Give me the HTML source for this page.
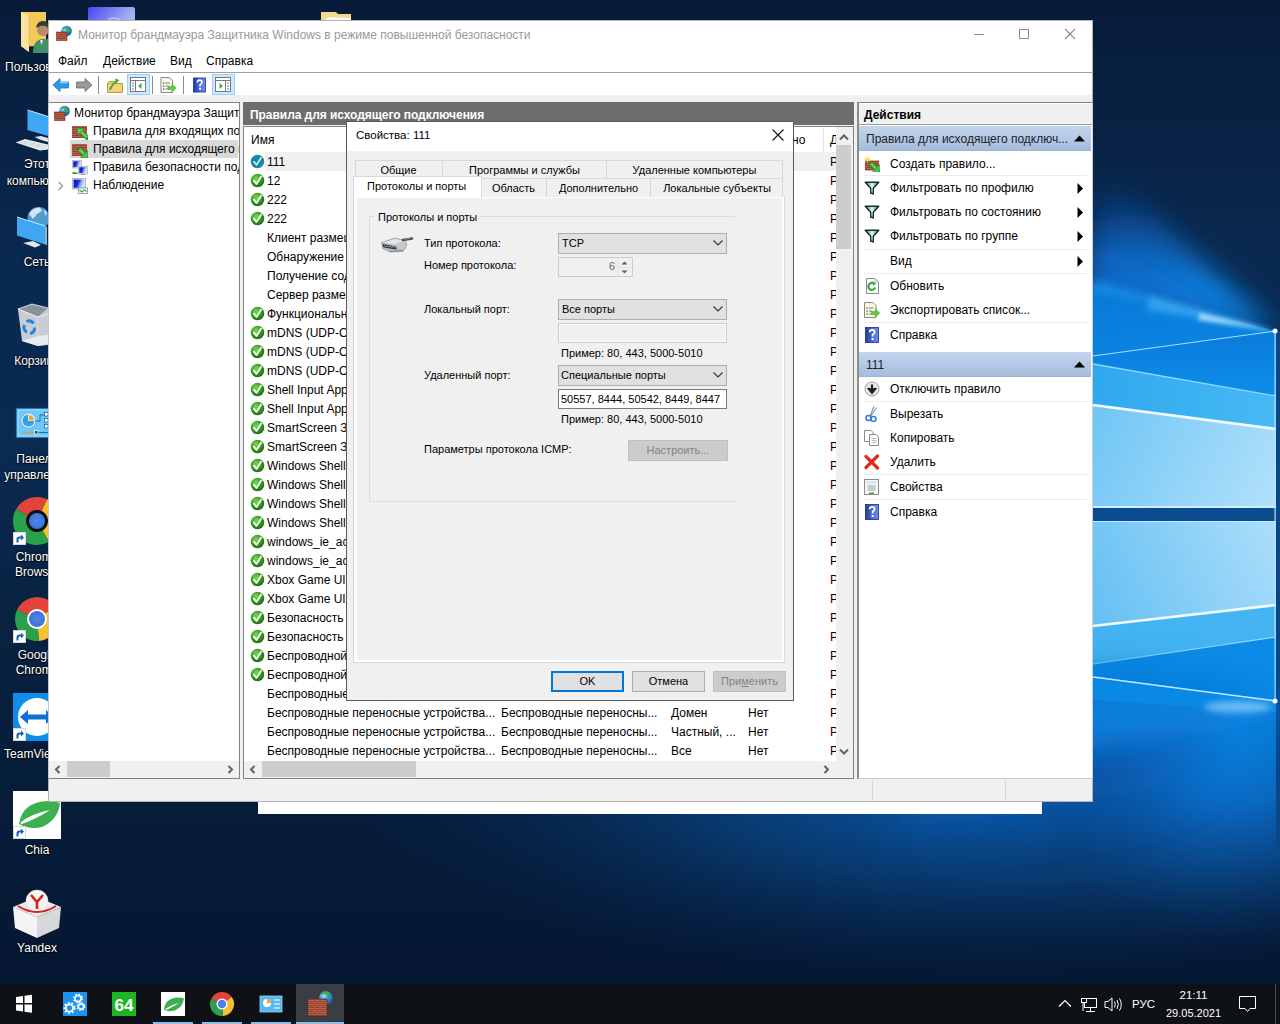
<!DOCTYPE html>
<html><head><meta charset="utf-8">
<style>
*{box-sizing:border-box;margin:0;padding:0}
html,body{width:1280px;height:1024px;overflow:hidden}
body{position:relative;background:#0b2145;font-family:"Liberation Sans",sans-serif;font-size:12px;color:#000}
.a{position:absolute}
.t{position:absolute;white-space:nowrap;line-height:16px;height:16px}
.s11{font-size:11px}
</style></head><body>

<svg width="0" height="0" style="position:absolute">
<defs>
<pattern id="brick" width="6" height="4" patternUnits="userSpaceOnUse">
<rect width="6" height="4" fill="#c4674c"/>
<path d="M0 1.6H6M0 3.6H6M2 0V1.6M5 1.6V3.6" stroke="#7a3324" stroke-width="0.7"/>
</pattern>
<radialGradient id="globe" cx="0.35" cy="0.35" r="0.7">
<stop offset="0" stop-color="#9fe3ff"/><stop offset="0.5" stop-color="#2a8fd8"/><stop offset="1" stop-color="#155a9a"/>
</radialGradient>
<radialGradient id="chk" cx="0.4" cy="0.35" r="0.7">
<stop offset="0" stop-color="#7ed957"/><stop offset="0.6" stop-color="#2f9a1e"/><stop offset="1" stop-color="#17640e"/>
</radialGradient>
<symbol id="fw" viewBox="0 0 16 16">
<circle cx="10.5" cy="6" r="5.3" fill="url(#globe)"/>
<path d="M7 3.5Q9 2 11 3.2Q10 5 12 6Q14 5 15.3 6.2" stroke="#3cb043" stroke-width="1.6" fill="none"/>
<rect x="0.5" y="7" width="10.5" height="8.5" fill="url(#brick)" stroke="#7a2e1f" stroke-width="0.6"/>
</symbol>
<symbol id="fwin" viewBox="0 0 16 16">
<rect x="0" y="2" width="15" height="12" fill="url(#brick)"/>
<path d="M15 13.5L9 7.5" stroke="#2e8a2a" stroke-width="4.6" stroke-linecap="round"/>
<path d="M15 13.5L9 7.5" stroke="#5ad25a" stroke-width="3"/>
<path d="M5 4L12 4.8L5.8 11Z" fill="#5ad25a" stroke="#2e8a2a" stroke-width="0.7" stroke-linejoin="round"/>
</symbol>
<symbol id="fwout" viewBox="0 0 16 16">
<rect x="0" y="2" width="15" height="12" fill="url(#brick)"/>
<path d="M7.5 7.5L12.5 12.5" stroke="#2e8a2a" stroke-width="4.6" stroke-linecap="round"/>
<path d="M7.5 7.5L12.5 12.5" stroke="#5ad25a" stroke-width="3"/>
<path d="M16 16L8.5 15.5L15.5 8.5Z" fill="#4cc24c" stroke="#2e8a2a" stroke-width="0.7" stroke-linejoin="round"/>
</symbol>
<symbol id="ipsec" viewBox="0 0 16 16">
<defs><linearGradient id="gScr" x1="0" y1="0" x2="1" y2="0.3"><stop offset="0" stop-color="#0a10b0"/><stop offset="0.5" stop-color="#1a30d8"/><stop offset="0.72" stop-color="#8aa0f0"/><stop offset="1" stop-color="#dce6ff"/></linearGradient></defs>
<rect x="0.5" y="0.5" width="9" height="7.5" fill="#d8dce4" stroke="#a8aeb8" stroke-width="0.7"/>
<rect x="1.3" y="1.3" width="7.4" height="5.8" fill="url(#gScr)"/>
<rect x="6.5" y="6.5" width="9" height="7.5" fill="#d8dce4" stroke="#a8aeb8" stroke-width="0.7"/>
<rect x="7.3" y="7.3" width="7.4" height="5.8" fill="url(#gScr)"/>
<path d="M9 14.5H13" stroke="#888" stroke-width="0.8"/>
<path d="M0.5 14V12.5Q2 11 3.5 12.5H5.5V14Z" fill="#2f9e2f"/>
</symbol>
<symbol id="mon" viewBox="0 0 16 16">
<rect x="0.5" y="0.5" width="13" height="10.5" fill="#d8dce4" stroke="#a8aeb8" stroke-width="0.8"/>
<rect x="1.6" y="1.6" width="10.8" height="8.2" fill="url(#gScr)"/>
<rect x="6.5" y="10" width="9" height="5.5" fill="#f4fbff" stroke="#7a8ea0" stroke-width="0.8"/>
<path d="M7.5 12L10 14L12.5 12L14.5 13.5" stroke="#3cb043" stroke-width="1.1" fill="none"/>
</symbol>
<symbol id="ok" viewBox="0 0 16 16">
<circle cx="8" cy="8" r="7.2" fill="url(#chk)"/>
<path d="M4.2 8.2L7 11.5L11.8 4" stroke="#fff" stroke-width="2" fill="none" stroke-linecap="round" stroke-linejoin="round"/>
</symbol>
<symbol id="oksel" viewBox="0 0 16 16">
<circle cx="8" cy="8" r="7.2" fill="#1f86a8"/>
<path d="M4.2 8.2L7 11.5L11.8 4" stroke="#cfe" stroke-width="1.6" fill="none" stroke-linecap="round"/>
</symbol>
<symbol id="funnel" viewBox="0 0 16 16">
<defs><linearGradient id="gFun" x1="0" y1="0" x2="1" y2="0"><stop offset="0" stop-color="#2f8a7a"/><stop offset="0.5" stop-color="#e8f4f2"/><stop offset="1" stop-color="#2f8a7a"/></linearGradient></defs>
<path d="M1.2 2.2H14.8L9.3 8.2V14L6.7 13V8.2Z" fill="url(#gFun)" stroke="#14302c" stroke-width="1.4" stroke-linejoin="round"/>
</symbol>
<symbol id="help" viewBox="0 0 16 16">
<defs><linearGradient id="gHelp" x1="0" y1="0" x2="1" y2="0"><stop offset="0" stop-color="#1f3c9c"/><stop offset="0.5" stop-color="#4a6ad6"/><stop offset="1" stop-color="#6f8ee8"/></linearGradient></defs>
<rect x="1.5" y="0.5" width="13" height="15" fill="url(#gHelp)" stroke="#1b2a80" stroke-width="0.8"/>
<path d="M5.6 5.3Q5.6 2.8 8.1 2.8Q10.6 2.8 10.6 5Q10.6 6.6 8.6 7.6V9.6" stroke="#fff" stroke-width="1.7" fill="none"/>
<rect x="7.6" y="11" width="2" height="2" fill="#fff"/>
</symbol>
<symbol id="export" viewBox="0 0 16 16">
<path d="M0.5 0.5H9L12 3.5V15.5H0.5Z" fill="#fbf8e8" stroke="#8a8a7a"/>
<rect x="2.5" y="5.5" width="1.2" height="1.2" fill="#333"/>
<rect x="2.5" y="8.5" width="1.2" height="1.2" fill="#333"/>
<rect x="2.5" y="11.5" width="1.2" height="1.2" fill="#333"/>
<path d="M5 6H9.5M5 9H8M5 12H8" stroke="#777" stroke-width="1"/>
<path d="M7.5 9.5H11.5V7L15.8 11L11.5 15V12.5H7.5Z" fill="#5ccf3e" stroke="#3e9a2a" stroke-width="0.5"/>
</symbol>
<symbol id="refresh" viewBox="0 0 16 16">
<path d="M2.5 0.5H11L14.5 4V15.5H2.5Z" fill="#fff" stroke="#8a8a8a"/>
<path d="M11 0.5V4H14.5" fill="none" stroke="#b0b0b0" stroke-width="0.8"/>
<path d="M11.2 9.5A3.5 3.5 0 1 1 9.5 5.3" stroke="#3aa845" stroke-width="2.2" fill="none"/>
<path d="M8.5 3.2L12.3 5.2L9.3 8Z" fill="#3aa845"/>
</symbol>
<symbol id="newrule" viewBox="0 0 16 16">
<rect x="1" y="4.5" width="14" height="10" fill="url(#brick)"/>
<path d="M3.5 0.5V6.5M0.5 3.5H6.5M1.3 1.3L5.7 5.7M5.7 1.3L1.3 5.7" stroke="#ffc830" stroke-width="0.9"/>
<circle cx="3.5" cy="3.5" r="1.8" fill="#ffe060"/>
<path d="M7 7.5L12 12.5" stroke="#2e8a2a" stroke-width="4.4" stroke-linecap="round"/>
<path d="M7 7.5L12 12.5" stroke="#5ad25a" stroke-width="2.8"/>
<path d="M16 16L8.5 15.5L15.5 8.5Z" fill="#4cc24c" stroke="#2e8a2a" stroke-width="0.6"/>
</symbol>
<symbol id="disable" viewBox="0 0 16 16">
<circle cx="8" cy="8" r="7" fill="#ececec" stroke="#9a9a9a"/>
<circle cx="8" cy="8" r="5" fill="#dcdcdc"/>
<path d="M8 3.5V10M4.8 8L8 12L11.2 8Z" stroke="#222" stroke-width="2" fill="#222"/>
</symbol>
<symbol id="cut" viewBox="0 0 16 16">
<path d="M10 0.5L6 10M12.5 1.5L7 10" stroke="#8a9aa8" stroke-width="1.2"/>
<circle cx="4.5" cy="12" r="2.5" fill="none" stroke="#2d7fd6" stroke-width="1.5"/>
<circle cx="9.5" cy="13" r="2.5" fill="none" stroke="#2d7fd6" stroke-width="1.5"/>
</symbol>
<symbol id="copy" viewBox="0 0 16 16">
<path d="M0.5 0.5H7L9 2.5V11.5H0.5Z" fill="#fff" stroke="#8a8a8a"/>
<path d="M5.5 4.5H12L14.5 7V15.5H5.5Z" fill="#fff" stroke="#8a8a8a"/>
<path d="M7.5 8.5H12.5M7.5 10.5H12.5M7.5 12.5H12.5" stroke="#9aa" stroke-width="0.8"/>
</symbol>
<symbol id="del" viewBox="0 0 16 16">
<path d="M2 2.5L13.5 14M13.5 2L2 13.5" stroke="#e02a20" stroke-width="3.2" stroke-linecap="round"/>
</symbol>
<symbol id="props" viewBox="0 0 16 16">
<rect x="0.5" y="0.5" width="14" height="15" fill="#f6f6f6" stroke="#8a8a8a"/>
<rect x="2.5" y="2.5" width="10" height="2" fill="#cfe0f0"/>
<path d="M3.5 7H11.5M3.5 9H11.5M3.5 11H11.5" stroke="#7a8a9a" stroke-width="0.8"/>
<rect x="5" y="13.5" width="5" height="1.5" fill="#3cb043"/>
</symbol>
</defs></svg>
<!-- WALLPAPER -->
<svg class="a" style="left:0;top:0" width="1280" height="1024" viewBox="0 0 1280 1024">
<defs>
<linearGradient id="gBase" x1="0" y1="0" x2="0" y2="1">
<stop offset="0" stop-color="#071b38"/><stop offset="0.25" stop-color="#0a2950"/><stop offset="0.45" stop-color="#0a2a52"/><stop offset="0.62" stop-color="#08223f"/><stop offset="0.8" stop-color="#061c39"/><stop offset="1" stop-color="#051530"/>
</linearGradient>
<radialGradient id="gBot1" cx="0" cy="0" r="200" gradientUnits="userSpaceOnUse" gradientTransform="translate(1000 790) scale(3.3 1)">
<stop offset="0" stop-color="#0a5aae"/><stop offset="0.45" stop-color="#09417c" stop-opacity="0.8"/><stop offset="1" stop-color="#06254e" stop-opacity="0"/>
</radialGradient>
<radialGradient id="gBot2" cx="1230" cy="715" r="230" gradientUnits="userSpaceOnUse">
<stop offset="0" stop-color="#0a90ec"/><stop offset="0.4" stop-color="#0a6cc8" stop-opacity="0.9"/><stop offset="1" stop-color="#083a78" stop-opacity="0"/>
</radialGradient>
<linearGradient id="gUpGlow" x1="1180" y1="318" x2="1150" y2="170" gradientUnits="userSpaceOnUse">
<stop offset="0" stop-color="#0a7ee0"/><stop offset="0.35" stop-color="#0a56a8"/><stop offset="1" stop-color="#07234a" stop-opacity="0"/>
</linearGradient>
<linearGradient id="gPaneA" x1="1093" y1="340" x2="1093" y2="400" gradientUnits="userSpaceOnUse">
<stop offset="0" stop-color="#0b7ddc"/><stop offset="1" stop-color="#0c90ea"/>
</linearGradient>
<linearGradient id="gPaneB" x1="1093" y1="380" x2="1276" y2="420" gradientUnits="userSpaceOnUse">
<stop offset="0" stop-color="#30a8ee"/><stop offset="1" stop-color="#46baf4"/>
</linearGradient>
<linearGradient id="gPaneC" x1="1093" y1="420" x2="1276" y2="507" gradientUnits="userSpaceOnUse">
<stop offset="0" stop-color="#70c6f5"/><stop offset="1" stop-color="#b2e1fb"/>
</linearGradient>
<linearGradient id="gPaneD" x1="1093" y1="610" x2="1276" y2="521" gradientUnits="userSpaceOnUse">
<stop offset="0" stop-color="#66c0f3"/><stop offset="1" stop-color="#acdefa"/>
</linearGradient>
<filter id="blur1" x="-20%" y="-50%" width="140%" height="200%"><feGaussianBlur stdDeviation="0.7"/></filter>
<filter id="blur3" x="-50%" y="-50%" width="200%" height="200%"><feGaussianBlur stdDeviation="3"/></filter>
<filter id="blur2" x="-50%" y="-50%" width="200%" height="200%"><feGaussianBlur stdDeviation="2"/></filter>
<filter id="blur12" x="-50%" y="-50%" width="200%" height="200%"><feGaussianBlur stdDeviation="14"/></filter>
<filter id="blur20" x="-50%" y="-50%" width="200%" height="200%"><feGaussianBlur stdDeviation="28"/></filter>
</defs>
<rect x="0" y="0" width="1280" height="1024" fill="url(#gBase)"/>
<rect x="200" y="560" width="1080" height="440" fill="url(#gBot1)"/>
<rect x="900" y="480" width="380" height="500" fill="url(#gBot2)"/>
<!-- upper glow -->
<defs>
<linearGradient id="gUG2" x1="1150" y1="170" x2="1165" y2="300" gradientUnits="userSpaceOnUse">
<stop offset="0" stop-color="#0a3470" stop-opacity="0"/><stop offset="0.45" stop-color="#0a54a6" stop-opacity="0.9"/><stop offset="1" stop-color="#0a88e8"/>
</linearGradient>
<linearGradient id="gWedge" x1="1150" y1="290" x2="1160" y2="350" gradientUnits="userSpaceOnUse">
<stop offset="0" stop-color="#0a7ad9"/><stop offset="1" stop-color="#0a84e0"/>
</linearGradient>
</defs>
<path d="M1093 160L1276 331L1093 300Z" fill="url(#gUG2)" filter="url(#blur12)"/>
<path d="M1093 240L1276 331L1093 295Z" fill="#0a66c8" opacity="0.7" filter="url(#blur12)"/>
<path d="M1093 284L1276 331L1093 356Z" fill="url(#gWedge)"/>
<path d="M1093 278L1276 331L1093 292Z" fill="#1a8ee8" opacity="0.6" filter="url(#blur3)"/>
<path d="M1276 331L1150 296L1146 310Z" fill="#4ab4f6" opacity="0.6" filter="url(#blur3)"/>
<path d="M1276 331L1200 313L1198 320Z" fill="#c8ecff" opacity="0.75" filter="url(#blur2)"/>
<rect x="1276" y="331" width="4" height="520" fill="#0a4688"/>
<!-- upper pane -->
<path d="M1093 356L1276 331V507H1093Z" fill="url(#gPaneA)"/>
<path d="M1093 364L1276 396V507H1093Z" fill="url(#gPaneB)"/>
<path d="M1093 404L1276 429V507H1093Z" fill="url(#gPaneC)"/>
<path d="M1093 364L1276 396" stroke="#8fd6fb" stroke-width="1.3" filter="url(#blur1)"/>
<path d="M1093 405L1276 429" stroke="#f4fcff" stroke-width="2.6" filter="url(#blur1)"/>
<path d="M1093 356L1276 331" stroke="#a8e0fc" stroke-width="1"/>
<rect x="1093" y="506" width="183" height="2" fill="#d0eeff"/>
<rect x="1093" y="508" width="183" height="13" fill="#0b4c90"/>
<!-- lower pane -->
<path d="M1093 521H1276V701L1093 677Z" fill="url(#gPaneD)"/>
<path d="M1093 626L1276 605V701L1093 677Z" fill="#44b5f2"/>
<path d="M1093 664L1276 637V701L1093 677Z" fill="#0c8ce8"/>
<path d="M1093 626L1276 605" stroke="#f4fcff" stroke-width="2.6" filter="url(#blur1)"/>
<path d="M1093 664L1276 637" stroke="#8fd6fb" stroke-width="1.2" filter="url(#blur1)"/>
<rect x="1093" y="521" width="183" height="1" fill="#c0e8ff"/>
<path d="M1093 677L1276 701" stroke="#b8e6ff" stroke-width="1.3"/>
<rect x="1274.5" y="331" width="1.2" height="370" fill="#b8e4fc"/>
<defs>
<linearGradient id="gBelow2" x1="1093" y1="690" x2="1150" y2="820" gradientUnits="userSpaceOnUse">
<stop offset="0" stop-color="#0a88e8"/><stop offset="0.5" stop-color="#0a6ccc"/><stop offset="1" stop-color="#0a4a94" stop-opacity="0"/>
</linearGradient>
<radialGradient id="gCornerDark" cx="1280" cy="790" r="110" gradientUnits="userSpaceOnUse">
<stop offset="0" stop-color="#062a58"/><stop offset="1" stop-color="#062a58" stop-opacity="0"/>
</radialGradient>
</defs>
<path d="M1276 701L1093 677L900 740L900 830L1150 790Z" fill="#0a5cb4" opacity="0.6" filter="url(#blur20)"/>
<path d="M1276 701L1093 677L1030 700L1080 750L1276 722Z" fill="#0a84e2" opacity="0.85" filter="url(#blur12)"/>
<path d="M1093 677L1276 701V712L1093 700Z" fill="#0a88e6"/>
<path d="M1093 677L1276 701" stroke="#b8e6ff" stroke-width="1.3"/>
<ellipse cx="1238" cy="707" rx="34" ry="6" fill="#a8dcff" opacity="0.6" filter="url(#blur3)"/>
<circle cx="1275" cy="701" r="2.5" fill="#fff" filter="url(#blur1)"/>
<circle cx="1275" cy="331" r="2.5" fill="#fff" filter="url(#blur1)"/>
</svg>

<!-- DESKTOP ICONS -->
<style>.dl{position:absolute;color:#fff;white-space:nowrap;line-height:16px;height:16px;text-shadow:0 0 2px #000,0 1px 1px #000;width:74px;text-align:center}</style>
<svg class="a" style="left:0;top:0" width="400" height="984" viewBox="0 0 400 984">
<defs>
<linearGradient id="gFold" x1="0" y1="0" x2="1" y2="0"><stop offset="0" stop-color="#e8b94a"/><stop offset="1" stop-color="#ffe08a"/></linearGradient>
<radialGradient id="gChromeC" cx="0.5" cy="0.5" r="0.5"><stop offset="0" stop-color="#4f86ec"/><stop offset="1" stop-color="#3b73d6"/></radialGradient>
<symbol id="sc" viewBox="0 0 13 13"><rect x="0" y="0" width="13" height="13" fill="#fff"/><rect x="0.5" y="0.5" width="12" height="12" fill="#fff" stroke="#cfd8e4"/><path d="M3.5 10.5V7Q3.5 4.5 6.5 4.5H8V2.5L11 5.5L8 8.5V6.5H6.5Q5.5 6.5 5.5 8V10.5Z" fill="#1e5fb4"/></symbol>
</defs>
<!-- top partial icons of 2nd column -->
<defs><linearGradient id="gTopIc" x1="0" y1="0" x2="1" y2="0.3"><stop offset="0" stop-color="#4644ee"/><stop offset="1" stop-color="#a6b4ee"/></linearGradient></defs>
<rect x="88" y="7" width="47" height="16" rx="2.5" fill="url(#gTopIc)"/>
<path d="M108 20Q114 16 120 20" stroke="#c8d0f4" stroke-width="1.5" fill="none" opacity="0.7"/>
<path d="M321 12H336L338 14H351V20H321Z" fill="#f3d98e"/>
<path d="M328 17L351 18V20H326Z" fill="#fafafa"/>
<!-- user folder -->
<path d="M21 12H46V46H29V52L21 46Z" fill="#f3c95a"/>
<path d="M21 12L29 15V52L21 46Z" fill="#fbe3a0"/>
<path d="M29 15V46H46" stroke="#e0b048" stroke-width="0.6" fill="none"/>
<path d="M33 53Q33 40 42 39H48V53Z" fill="#3f8f67"/>
<path d="M40 40L41.5 45L43 40Z" fill="#e8f0ea"/>
<circle cx="43" cy="30" r="6" fill="#b48c6c"/>
<path d="M36 28Q37 21 43 21Q48 21 48 25V28Q45 24 38 27Z" fill="#3b3b3b"/>
<!-- this computer -->
<path d="M27.5 110L48 116.5V136L27.5 130Z" fill="#3ea6f2"/>
<path d="M27.5 110L48 116.5" stroke="#cfe8f8" stroke-width="1"/>
<path d="M34.5 137L41 136L48 138V142L41 140Z" fill="#dfe4ea"/>
<path d="M15.5 142.5L25 139L48 144.5V149.5L40 150.5Z" fill="#e6eaee"/>
<path d="M19 142L44 148M22.5 141L46.5 146.5M24 144L30 140M30 146L36 141.5M36 147.5L42 143" stroke="#b9c3cc" stroke-width="0.5"/>
<!-- network -->
<circle cx="38.5" cy="218" r="11" fill="#4f9ccc"/>
<path d="M29 214Q33 207 40 207.5L42 211L37 214L33 219Z" fill="#cfe6f4"/>
<path d="M44 209L47 213L45 216Z" fill="#cfe6f4"/>
<path d="M17 217L45 226V244.5L17 235.5Z" fill="#3ea6f2"/>
<path d="M45 226L47 227V245L45 244.5Z" fill="#9ab0c0"/>
<path d="M17 217L45 226" stroke="#cfe8f8" stroke-width="1"/>
<path d="M23 243L33 241L41 245L35 247.5Z" fill="#e2e7ec"/>
<!-- recycle bin -->
<path d="M18 309L32 304L48 308V345L38 346L22 341Z" fill="#c9cdd3"/>
<path d="M18 309L32 304L48 308L38 317Z" fill="#8c929a"/>
<path d="M18 309L38 317L48 314" stroke="#eef0f2" stroke-width="1" fill="none"/>
<path d="M18 309L32 304L48 308" stroke="#e4e7ea" stroke-width="0.8" fill="none"/>
<path d="M22 341L38 346L48 344V335L38 336Z" fill="#e9ecef"/>
<path d="M38 317V346" stroke="#dde1e5" stroke-width="0.8"/>
<path d="M26.5 321.5A5 5 0 0 1 33.5 323.5" stroke="#1f86e0" stroke-width="3" fill="none"/>
<path d="M34.5 327.5A5 5 0 0 1 30 333.5" stroke="#1f86e0" stroke-width="3" fill="none"/>
<path d="M27 332A5 5 0 0 1 24.5 325" stroke="#1f86e0" stroke-width="3" fill="none"/>
<!-- control panel -->
<rect x="16.5" y="408.5" width="34" height="29" fill="#6ec6f6" stroke="#2a78b8" stroke-width="1.2"/>
<rect x="18" y="410" width="31" height="26" fill="none" stroke="#b8e6fc" stroke-width="0.8"/>
<circle cx="28.5" cy="420.5" r="6.5" fill="#3c9ee2" stroke="#e8f8ff" stroke-width="1"/>
<path d="M28.5 420.5V414.5A6 6 0 0 1 34.5 420.5Z" fill="#f5a623" stroke="#e8f8ff" stroke-width="0.8"/>
<path d="M35 421H40V415H44" stroke="#1a5a9a" stroke-width="0.8" fill="none"/>
<rect x="44.5" y="412.5" width="3.5" height="3.5" fill="#fff" stroke="#1a5a9a" stroke-width="0.7"/>
<rect x="44.5" y="418.5" width="3.5" height="3.5" fill="#fff" stroke="#1a5a9a" stroke-width="0.7"/>
<rect x="44.5" y="424.5" width="3.5" height="3.5" fill="#fff" stroke="#1a5a9a" stroke-width="0.7"/>
<path d="M22 432.5H34" stroke="#d9a040" stroke-width="1.3"/>
<path d="M38 432.5H50" stroke="#1a6ac0" stroke-width="1"/>
<rect x="34.5" y="430.5" width="3.5" height="3.5" fill="#1a4a80" stroke="#e8f8ff" stroke-width="0.8"/>
<!-- chrome browser (dark ring) -->
<g>
<path d="M37 521L16.2 509.0A24 24 0 0 1 47.1 499.2Z" fill="#e0443a"/>
<path d="M37 521L47.1 499.2A24 24 0 0 1 49.0 541.8Z" fill="#f6c12f"/>
<path d="M37 521L49.0 541.8A24 24 0 0 1 16.2 509.0Z" fill="#2aa14a"/>
<circle cx="37" cy="521" r="11" fill="#0d0f14"/>
<circle cx="37" cy="521" r="8" fill="url(#gChromeC)"/>
</g>
<use href="#sc" x="13" y="532" width="13" height="13"/>
<!-- google chrome -->
<g>
<path d="M37 619L17.1 609.7A22 22 0 0 1 55.0 606.4Z" fill="#e0443a"/>
<path d="M37 619L55.0 606.4A22 22 0 0 1 38.9 640.9Z" fill="#f6c12f"/>
<path d="M37 619L38.9 640.9A22 22 0 0 1 17.1 609.7Z" fill="#2aa14a"/>
<circle cx="37" cy="619" r="10" fill="#fff"/>
<circle cx="37" cy="619" r="8" fill="url(#gChromeC)"/>
</g>
<use href="#sc" x="13" y="630" width="13" height="13"/>
<!-- teamviewer -->
<rect x="13" y="693" width="48" height="48" fill="#0e8ee9"/>
<circle cx="37" cy="717" r="19" fill="#fff"/>
<path d="M20 717L28 710V714.5H46V710L54 717L46 724V719.5H28V724Z" fill="#0e6fd6"/>
<use href="#sc" x="13" y="728" width="13" height="13"/>
<!-- chia -->
<rect x="13" y="791" width="48" height="48" fill="#fff"/>
<path d="M19 824Q22 802 48 801Q56 801 60 803Q58 820 42 827Q30 830 19 824Z" fill="#3cb04e"/>
<path d="M20 823Q30 814 50 810Q38 818 22 824Z" fill="#fff"/>
<use href="#sc" x="13" y="826" width="13" height="13"/>
<!-- yandex -->
<path d="M13 907L37 897L61 907L37 917Z" fill="#e9eaec"/>
<path d="M13 907L37 917V938L15 928Z" fill="#f3f4f5"/>
<path d="M61 907L37 917V938L59 928Z" fill="#d6d8db"/>
<circle cx="37" cy="901" r="11" fill="#f5f5f5" stroke="#ddd" stroke-width="0.6"/>
<path d="M31 895L37 902L43 895M37 902V909" stroke="#e01d1d" stroke-width="2.6" fill="none"/>
<path d="M18 906Q37 918 56 906" stroke="#d52020" stroke-width="2" fill="none"/>
</svg>
<div class="dl" style="left:5px;top:59px;text-align:left">Пользователи</div>
<div class="dl" style="left:0px;top:156px">Этот</div>
<div class="dl" style="left:0px;top:173px">компьютер</div>
<div class="dl" style="left:0px;top:254px">Сеть</div>
<div class="dl" style="left:0px;top:353px">Корзина</div>
<div class="dl" style="left:0px;top:451px">Панель</div>
<div class="dl" style="left:0px;top:467px">управления</div>
<div class="dl" style="left:0px;top:549px">Chrome</div>
<div class="dl" style="left:0px;top:564px">Browser</div>
<div class="dl" style="left:0px;top:647px">Google</div>
<div class="dl" style="left:0px;top:662px">Chrome</div>
<div class="dl" style="left:0px;top:746px">TeamViewer</div>
<div class="dl" style="left:0px;top:842px">Chia</div>
<div class="dl" style="left:0px;top:940px">Yandex</div>

<!-- TASKBAR -->
<div class="a" style="left:0;top:984px;width:1280px;height:40px;background:#0e1116"></div>
<div class="a" style="left:296px;top:984px;width:48px;height:40px;background:#3a3d42"></div>
<div class="a" style="left:153px;top:1022px;width:40px;height:2px;background:#8cbbe6"></div>
<div class="a" style="left:202px;top:1022px;width:40px;height:2px;background:#8cbbe6"></div>
<div class="a" style="left:251px;top:1022px;width:40px;height:2px;background:#8cbbe6"></div>
<div class="a" style="left:296px;top:1022px;width:48px;height:2px;background:#8cbbe6"></div>
<svg class="a" style="left:0;top:984px" width="1280" height="40" viewBox="0 984 1280 40">
<path d="M16 997L23 996V1003H16ZM24.5 995.8L32 994.8V1003H24.5ZM16 1004.5H23V1011.5L16 1010.5ZM24.5 1004.5H32V1012.8L24.5 1011.8Z" fill="#fff"/>
<rect x="63" y="992" width="24" height="24" fill="#1b93f0"/>
<circle cx="78" cy="998.5" r="3" fill="none" stroke="#fff" stroke-width="1.6"/>
<circle cx="78" cy="998.5" r="4.2" fill="none" stroke="#fff" stroke-width="1.6" stroke-dasharray="1.6 1.7"/>
<circle cx="69.5" cy="1008" r="3.6" fill="none" stroke="#fff" stroke-width="1.8"/>
<circle cx="69.5" cy="1008" r="5.2" fill="none" stroke="#fff" stroke-width="1.8" stroke-dasharray="1.8 1.9"/>
<circle cx="81" cy="1006.5" r="2.6" fill="none" stroke="#fff" stroke-width="1.5"/>
<circle cx="81" cy="1006.5" r="3.8" fill="none" stroke="#fff" stroke-width="1.4" stroke-dasharray="1.5 1.5"/>
<rect x="112" y="992" width="24" height="24" fill="#1fb423"/>
<text x="124" y="1011" font-family="Liberation Sans" font-size="17" font-weight="bold" fill="#fff" text-anchor="middle">64</text>
<rect x="161" y="992" width="24" height="24" fill="#fff"/>
<path d="M164 1010Q165 998 178 997.5Q182 997.5 184 998.5Q183 1007 175 1010.5Q169 1012 164 1010Z" fill="#3cb04e"/>
<path d="M165 1009.5Q170 1005 179 1003Q173 1007 166 1010Z" fill="#fff"/>
<g>
<path d="M222 1004L211.1 998.9A12 12 0 0 1 231.8 997.1Z" fill="#e0443a"/>
<path d="M222 1004L231.8 997.1A12 12 0 0 1 223.0 1016.0Z" fill="#f6c12f"/>
<path d="M222 1004L223.0 1016.0A12 12 0 0 1 211.1 998.9Z" fill="#2aa14a"/>
<circle cx="222" cy="1004" r="5.5" fill="#fff"/>
<circle cx="222" cy="1004" r="4.2" fill="#4a80e8"/>
</g>
<rect x="260" y="996" width="22" height="16" fill="#5bb7ef" stroke="#9ad4f6" stroke-width="0.8"/>
<circle cx="267" cy="1003" r="4" fill="#fff"/><path d="M267 1003V999A4 4 0 0 1 271 1003Z" fill="#f5a623"/>
<path d="M274 1000H280M274 1004H280M274 1008H280" stroke="#fff" stroke-width="1"/>
<circle cx="326" cy="998" r="7" fill="url(#globe)"/>
<path d="M321 994Q324 992 328 993Q327 997 331 998" stroke="#3cb043" stroke-width="2" fill="none"/>
<rect x="308" y="999" width="19" height="17" fill="url(#brick)" stroke="#6a2a1c" stroke-width="0.6"/>
<path d="M1059 1006.5L1065 1000.5L1071 1006.5" stroke="#fff" stroke-width="1.2" fill="none"/>
<rect x="1084.5" y="998.5" width="12" height="9" fill="none" stroke="#fff" stroke-width="1"/>
<rect x="1081.5" y="998.5" width="5" height="4" fill="#0e1116" stroke="#fff" stroke-width="1"/>
<path d="M1090.5 1007.5V1011M1086 1011.5H1095M1083 1003V1011" stroke="#fff" stroke-width="1"/>
<path d="M1105 1001.5H1108L1112 998V1011L1108 1007.5H1105Z" fill="none" stroke="#fff" stroke-width="1"/>
<path d="M1114.5 1001.5Q1116 1004.5 1114.5 1007.5M1117 1000Q1119.5 1004.5 1117 1009M1119.5 998.5Q1123 1004.5 1119.5 1010.5" stroke="#fff" stroke-width="1" fill="none"/>
<path d="M1239.5 996.5H1255.5V1008.5H1250L1247.5 1011.5L1245 1008.5H1239.5Z" fill="none" stroke="#fff" stroke-width="1"/>
<rect x="1275" y="984" width="1" height="40" fill="#4a4d52"/>
</svg>
<div class="t" style="left:1132px;top:996px;color:#fff;font-size:11.5px">РУС</div>
<div class="t" style="left:1160px;top:987px;width:67px;text-align:center;color:#fff;font-size:11.5px">21:11</div>
<div class="t" style="left:1160px;top:1005px;width:67px;text-align:center;color:#fff;font-size:11px">29.05.2021</div>

<!-- BACK STRIP -->
<div class="a" style="left:258px;top:802px;width:784px;height:12px;background:#fff"></div>

<!-- MMC WINDOW -->
<div class="a" style="left:48px;top:20px;width:1045px;height:782px;background:#fff;border:1px solid #b4b4b4"></div>
<!-- title -->
<div class="t" style="left:78px;top:27px;color:#999;font-size:12px">Монитор брандмауэра Защитника Windows в режиме повышенной безопасности</div>
<div class="a" style="left:974px;top:34px;width:10px;height:1px;background:#8c8c8c"></div>
<div class="a" style="left:1019px;top:29px;width:10px;height:10px;border:1px solid #8c8c8c"></div>
<svg class="a" style="left:1064px;top:28px" width="12" height="12"><path d="M1 1L11 11M11 1L1 11" stroke="#8c8c8c" stroke-width="1.1"/></svg>

<!-- menu -->
<div class="t" style="left:58px;top:53px">Файл</div>
<div class="t" style="left:103px;top:53px">Действие</div>
<div class="t" style="left:170px;top:53px">Вид</div>
<div class="t" style="left:206px;top:53px">Справка</div>
<div class="a" style="left:49px;top:72px;width:1043px;height:1px;background:#a0a0a0"></div>
<!-- band -->
<div class="a" style="left:49px;top:95px;width:1043px;height:706px;background:#f0f0f0"></div>
<!-- tree pane -->
<div class="a" style="left:48px;top:102px;width:192px;height:677px;background:#fff;border:1px solid #828282;border-left-color:#c8c8c8"></div>
<!-- middle pane -->
<div class="a" style="left:243px;top:102px;width:611px;height:23px;background:#6d6d6d"></div>
<div class="t" style="left:250px;top:107px;color:#fff;font-weight:bold;letter-spacing:-0.05px">Правила для исходящего подключения</div>
<div class="a" style="left:243px;top:126px;width:611px;height:653px;background:#fff;border:1px solid #828282"></div>
<!-- right pane -->
<div class="a" style="left:857px;top:102px;width:236px;height:677px;background:#fff;border:1px solid #828282;border-left:2px solid #8c8c8c;border-right:1px solid #d0d0d0;border-bottom-color:#c8c8c8"></div>
<div class="a" style="left:859px;top:104px;width:233px;height:20px;background:#f0f0f0"></div>
<div class="t" style="left:864px;top:107px;font-weight:bold">Действия</div>
<div class="a" style="left:859px;top:124px;width:233px;height:1px;background:#a0a0a0"></div>
<!-- status bar -->
<div class="a" style="left:872px;top:780px;width:1px;height:21px;background:#d7d7d7"></div>
<div class="a" style="left:1005px;top:780px;width:1px;height:21px;background:#d7d7d7"></div>


<!-- title icon -->
<svg class="a" style="left:56px;top:25px" width="16" height="16"><use href="#fw"/></svg>
<!-- toolbar -->
<svg class="a" style="left:52px;top:77px" width="18" height="16"><path d="M1 8L8 1.5V5H16.5V11H8V14.5Z" fill="#2b9be8" stroke="#1f74c0" stroke-width="0.8"/><path d="M8 5.5H16" stroke="#8fd0ff" stroke-width="1.5"/></svg>
<svg class="a" style="left:75px;top:77px" width="18" height="16"><path d="M17 8L10 1.5V5H1.5V11H10V14.5Z" fill="#9a9a9a" stroke="#6a6a6a" stroke-width="0.8"/></svg>
<div class="a" style="left:98px;top:76px;width:1px;height:18px;background:#8a8a8a"></div>
<svg class="a" style="left:107px;top:77px" width="16" height="16"><path d="M0.5 6.5H15.5V15.5H0.5Z" fill="#f3d27a" stroke="#b89a3a"/><path d="M0.5 6.5L2 4.5H7L8 6.5" fill="#f3d27a" stroke="#b89a3a"/><path d="M3 13Q5 7 10 4" stroke="#3cb043" stroke-width="2" fill="none"/><path d="M8 1.5L12.5 3L9 6.5Z" fill="#3cb043"/></svg>
<div class="a" style="left:127px;top:74px;width:23px;height:21px;background:#cce8ff;border:1px solid #99d1ff"></div>
<svg class="a" style="left:130px;top:77px" width="16" height="15"><rect x="0.5" y="0.5" width="15" height="14" fill="#fff" stroke="#7a7a7a"/><path d="M0.5 3.5H15.5" stroke="#7a7a7a"/><path d="M5.5 3.5V14.5" stroke="#7a7a7a"/><path d="M2 6H4M2 9H4M2 12H4" stroke="#7a7a7a"/><path d="M11.5 6L8 9L11.5 12Z" fill="#3cb043"/></svg>
<div class="a" style="left:152px;top:76px;width:1px;height:18px;background:#8a8a8a"></div>
<svg class="a" style="left:160px;top:77px" width="17" height="16"><use href="#export"/></svg>
<div class="a" style="left:183px;top:76px;width:1px;height:18px;background:#8a8a8a"></div>
<svg class="a" style="left:192px;top:77px" width="15" height="16"><use href="#help"/></svg>
<div class="a" style="left:212px;top:74px;width:23px;height:21px;background:#cce8ff;border:1px solid #99d1ff"></div>
<svg class="a" style="left:215px;top:77px" width="16" height="15"><rect x="0.5" y="0.5" width="15" height="14" fill="#fff" stroke="#7a7a7a"/><path d="M0.5 3.5H15.5" stroke="#7a7a7a"/><path d="M10.5 3.5V14.5" stroke="#7a7a7a"/><path d="M12 6H14M12 9H14M12 12H14" stroke="#7a7a7a"/><path d="M4.5 6L8 9L4.5 12Z" fill="#3cb043"/></svg>
<!-- tree -->
<div class="a" style="left:49px;top:103px;width:190px;height:658px;overflow:hidden">
<div class="a" style="left:21px;top:37px;width:168px;height:18px;background:#d9d9d9"></div>
<svg class="a" style="left:5px;top:2px" width="16" height="16"><use href="#fw"/></svg>
<div class="t" style="left:25px;top:2px">Монитор брандмауэра Защитника Windows</div>
<svg class="a" style="left:23px;top:21px" width="16" height="16"><use href="#fwin"/></svg>
<div class="t" style="left:44px;top:20px">Правила для входящих подключений</div>
<svg class="a" style="left:23px;top:39px" width="16" height="16"><use href="#fwout"/></svg>
<div class="t" style="left:44px;top:38px">Правила для исходящего подключения</div>
<svg class="a" style="left:23px;top:57px" width="16" height="16"><use href="#ipsec"/></svg>
<div class="t" style="left:44px;top:56px">Правила безопасности подключений</div>
<svg class="a" style="left:8px;top:78px" width="7" height="10"><path d="M1.5 1L5.5 5L1.5 9" stroke="#a0a0a0" stroke-width="1.5" fill="none"/></svg>
<svg class="a" style="left:23px;top:75px" width="16" height="16"><use href="#mon"/></svg>
<div class="t" style="left:44px;top:74px">Наблюдение</div>
</div>
<div class="a" style="left:49px;top:761px;width:190px;height:17px;background:#f0f0f0"></div>
<div class="a" style="left:67px;top:761px;width:43px;height:16px;background:#cdcdcd"></div>
<svg class="a" style="left:54px;top:765px" width="7" height="9"><path d="M5.5 1L2 4.5L5.5 8" stroke="#606060" stroke-width="2" fill="none"/></svg>
<svg class="a" style="left:227px;top:765px" width="7" height="9"><path d="M1.5 1L5 4.5L1.5 8" stroke="#606060" stroke-width="2" fill="none"/></svg>
<!-- LIST -->
<div class="a" style="left:244px;top:127px;width:592px;height:634px;overflow:hidden">
<div class="t" style="left:7px;top:5px">Имя</div>
<div class="t" style="left:506px;top:5px">Включено</div>
<div class="a" style="left:579px;top:1px;width:1px;height:24px;background:#e5e5e5"></div>
<div class="t" style="left:586px;top:5px">Действие</div>
<div class="a" style="left:21px;top:25px;width:571px;height:19px;background:#f0f0f0"></div>
<svg class="a" style="left:6px;top:27px" width="15" height="15"><use href="#oksel"/></svg>
<div class="t" style="left:23px;top:27px">111</div>
<div class="t" style="left:586px;top:27px">Разрешить</div>
<svg class="a" style="left:6px;top:46px" width="15" height="15"><use href="#ok"/></svg>
<div class="t" style="left:23px;top:46px">12</div>
<div class="t" style="left:586px;top:46px">Разрешить</div>
<svg class="a" style="left:6px;top:65px" width="15" height="15"><use href="#ok"/></svg>
<div class="t" style="left:23px;top:65px">222</div>
<div class="t" style="left:586px;top:65px">Разрешить</div>
<svg class="a" style="left:6px;top:84px" width="15" height="15"><use href="#ok"/></svg>
<div class="t" style="left:23px;top:84px">222</div>
<div class="t" style="left:586px;top:84px">Разрешить</div>
<div class="t" style="left:23px;top:103px">Клиент размещенного кэша BranchCache</div>
<div class="t" style="left:586px;top:103px">Разрешить</div>
<div class="t" style="left:23px;top:122px">Обнаружение сети (LLMNR-UDP-исх.)</div>
<div class="t" style="left:586px;top:122px">Разрешить</div>
<div class="t" style="left:23px;top:141px">Получение содержимого BranchCache</div>
<div class="t" style="left:586px;top:141px">Разрешить</div>
<div class="t" style="left:23px;top:160px">Сервер размещенного кэша BranchCache</div>
<div class="t" style="left:586px;top:160px">Разрешить</div>
<svg class="a" style="left:6px;top:179px" width="15" height="15"><use href="#ok"/></svg>
<div class="t" style="left:23px;top:179px">Функциональность рабочего стола</div>
<div class="t" style="left:586px;top:179px">Разрешить</div>
<svg class="a" style="left:6px;top:198px" width="15" height="15"><use href="#ok"/></svg>
<div class="t" style="left:23px;top:198px">mDNS (UDP-Out)</div>
<div class="t" style="left:586px;top:198px">Разрешить</div>
<svg class="a" style="left:6px;top:217px" width="15" height="15"><use href="#ok"/></svg>
<div class="t" style="left:23px;top:217px">mDNS (UDP-Out)</div>
<div class="t" style="left:586px;top:217px">Разрешить</div>
<svg class="a" style="left:6px;top:236px" width="15" height="15"><use href="#ok"/></svg>
<div class="t" style="left:23px;top:236px">mDNS (UDP-Out)</div>
<div class="t" style="left:586px;top:236px">Разрешить</div>
<svg class="a" style="left:6px;top:255px" width="15" height="15"><use href="#ok"/></svg>
<div class="t" style="left:23px;top:255px">Shell Input Application</div>
<div class="t" style="left:586px;top:255px">Разрешить</div>
<svg class="a" style="left:6px;top:274px" width="15" height="15"><use href="#ok"/></svg>
<div class="t" style="left:23px;top:274px">Shell Input Application</div>
<div class="t" style="left:586px;top:274px">Разрешить</div>
<svg class="a" style="left:6px;top:293px" width="15" height="15"><use href="#ok"/></svg>
<div class="t" style="left:23px;top:293px">SmartScreen Защитника Windows</div>
<div class="t" style="left:586px;top:293px">Разрешить</div>
<svg class="a" style="left:6px;top:312px" width="15" height="15"><use href="#ok"/></svg>
<div class="t" style="left:23px;top:312px">SmartScreen Защитника Windows</div>
<div class="t" style="left:586px;top:312px">Разрешить</div>
<svg class="a" style="left:6px;top:331px" width="15" height="15"><use href="#ok"/></svg>
<div class="t" style="left:23px;top:331px">Windows Shell Experience</div>
<div class="t" style="left:586px;top:331px">Разрешить</div>
<svg class="a" style="left:6px;top:350px" width="15" height="15"><use href="#ok"/></svg>
<div class="t" style="left:23px;top:350px">Windows Shell Experience</div>
<div class="t" style="left:586px;top:350px">Разрешить</div>
<svg class="a" style="left:6px;top:369px" width="15" height="15"><use href="#ok"/></svg>
<div class="t" style="left:23px;top:369px">Windows Shell Experience</div>
<div class="t" style="left:586px;top:369px">Разрешить</div>
<svg class="a" style="left:6px;top:388px" width="15" height="15"><use href="#ok"/></svg>
<div class="t" style="left:23px;top:388px">Windows Shell Experience</div>
<div class="t" style="left:586px;top:388px">Разрешить</div>
<svg class="a" style="left:6px;top:407px" width="15" height="15"><use href="#ok"/></svg>
<div class="t" style="left:23px;top:407px">windows_ie_ac_001</div>
<div class="t" style="left:586px;top:407px">Разрешить</div>
<svg class="a" style="left:6px;top:426px" width="15" height="15"><use href="#ok"/></svg>
<div class="t" style="left:23px;top:426px">windows_ie_ac_001</div>
<div class="t" style="left:586px;top:426px">Разрешить</div>
<svg class="a" style="left:6px;top:445px" width="15" height="15"><use href="#ok"/></svg>
<div class="t" style="left:23px;top:445px">Xbox Game UI</div>
<div class="t" style="left:586px;top:445px">Разрешить</div>
<svg class="a" style="left:6px;top:464px" width="15" height="15"><use href="#ok"/></svg>
<div class="t" style="left:23px;top:464px">Xbox Game UI</div>
<div class="t" style="left:586px;top:464px">Разрешить</div>
<svg class="a" style="left:6px;top:483px" width="15" height="15"><use href="#ok"/></svg>
<div class="t" style="left:23px;top:483px">Безопасность Windows</div>
<div class="t" style="left:586px;top:483px">Разрешить</div>
<svg class="a" style="left:6px;top:502px" width="15" height="15"><use href="#ok"/></svg>
<div class="t" style="left:23px;top:502px">Безопасность Windows</div>
<div class="t" style="left:586px;top:502px">Разрешить</div>
<svg class="a" style="left:6px;top:521px" width="15" height="15"><use href="#ok"/></svg>
<div class="t" style="left:23px;top:521px">Беспроводной дисплей</div>
<div class="t" style="left:586px;top:521px">Разрешить</div>
<svg class="a" style="left:6px;top:540px" width="15" height="15"><use href="#ok"/></svg>
<div class="t" style="left:23px;top:540px">Беспроводной дисплей</div>
<div class="t" style="left:586px;top:540px">Разрешить</div>
<div class="t" style="left:23px;top:559px">Беспроводные переносные устройства...</div>
<div class="t" style="left:586px;top:559px">Разрешить</div>
<div class="t" style="left:23px;top:578px">Беспроводные переносные устройства...</div>
<div class="t" style="left:257px;top:578px">Беспроводные переносны...</div>
<div class="t" style="left:427px;top:578px">Домен</div>
<div class="t" style="left:504px;top:578px">Нет</div>
<div class="t" style="left:586px;top:578px">Разрешить</div>
<div class="t" style="left:23px;top:597px">Беспроводные переносные устройства...</div>
<div class="t" style="left:257px;top:597px">Беспроводные переносны...</div>
<div class="t" style="left:427px;top:597px">Частный, ...</div>
<div class="t" style="left:504px;top:597px">Нет</div>
<div class="t" style="left:586px;top:597px">Разрешить</div>
<div class="t" style="left:23px;top:616px">Беспроводные переносные устройства...</div>
<div class="t" style="left:257px;top:616px">Беспроводные переносны...</div>
<div class="t" style="left:427px;top:616px">Все</div>
<div class="t" style="left:504px;top:616px">Нет</div>
<div class="t" style="left:586px;top:616px">Разрешить</div>
</div>
<div class="a" style="left:836px;top:127px;width:17px;height:634px;background:#f0f0f0"></div>
<div class="a" style="left:836px;top:145px;width:15px;height:104px;background:#cdcdcd"></div>
<svg class="a" style="left:839px;top:134px" width="10" height="7"><path d="M1 5.5L5 1.5L9 5.5" stroke="#606060" stroke-width="2" fill="none"/></svg>
<svg class="a" style="left:839px;top:748px" width="10" height="7"><path d="M1 1.5L5 5.5L9 1.5" stroke="#606060" stroke-width="2" fill="none"/></svg>
<div class="a" style="left:244px;top:761px;width:609px;height:17px;background:#f0f0f0"></div>
<div class="a" style="left:262px;top:761px;width:154px;height:16px;background:#cdcdcd"></div>
<svg class="a" style="left:249px;top:765px" width="7" height="9"><path d="M5.5 1L2 4.5L5.5 8" stroke="#606060" stroke-width="2" fill="none"/></svg>
<svg class="a" style="left:823px;top:765px" width="7" height="9"><path d="M1.5 1L5 4.5L1.5 8" stroke="#606060" stroke-width="2" fill="none"/></svg>
<!-- ACTIONS -->
<div class="a" style="left:859px;top:126px;width:232px;height:25px;background:linear-gradient(#c3d5ec,#a4bddf);border-bottom:1px solid #a0b4d0"></div>
<div class="t" style="left:866px;top:131px;color:#1e1e1e">Правила для исходящего подключ...</div>
<svg class="a" style="left:1074px;top:135px" width="11" height="7"><path d="M0 6.5L5.5 0.5L11 6.5Z" fill="#000"/></svg>
<svg class="a" style="left:864px;top:156px" width="16" height="16"><use href="#newrule"/></svg>
<div class="t" style="left:890px;top:156px">Создать правило...</div>
<svg class="a" style="left:864px;top:180px" width="16" height="16"><use href="#funnel"/></svg>
<div class="t" style="left:890px;top:180px">Фильтровать по профилю</div>
<svg class="a" style="left:1077px;top:183px" width="6" height="11"><path d="M0.5 0L6 5.5L0.5 11Z" fill="#000"/></svg>
<svg class="a" style="left:864px;top:204px" width="16" height="16"><use href="#funnel"/></svg>
<div class="t" style="left:890px;top:204px">Фильтровать по состоянию</div>
<svg class="a" style="left:1077px;top:207px" width="6" height="11"><path d="M0.5 0L6 5.5L0.5 11Z" fill="#000"/></svg>
<svg class="a" style="left:864px;top:228px" width="16" height="16"><use href="#funnel"/></svg>
<div class="t" style="left:890px;top:228px">Фильтровать по группе</div>
<svg class="a" style="left:1077px;top:231px" width="6" height="11"><path d="M0.5 0L6 5.5L0.5 11Z" fill="#000"/></svg>
<div class="t" style="left:890px;top:253px">Вид</div>
<svg class="a" style="left:1077px;top:256px" width="6" height="11"><path d="M0.5 0L6 5.5L0.5 11Z" fill="#000"/></svg>
<svg class="a" style="left:864px;top:278px" width="16" height="16"><use href="#refresh"/></svg>
<div class="t" style="left:890px;top:278px">Обновить</div>
<svg class="a" style="left:864px;top:302px" width="16" height="16"><use href="#export"/></svg>
<div class="t" style="left:890px;top:302px">Экспортировать список...</div>
<svg class="a" style="left:864px;top:327px" width="16" height="16"><use href="#help"/></svg>
<div class="t" style="left:890px;top:327px">Справка</div>
<svg class="a" style="left:864px;top:381px" width="16" height="16"><use href="#disable"/></svg>
<div class="t" style="left:890px;top:381px">Отключить правило</div>
<svg class="a" style="left:864px;top:406px" width="16" height="16"><use href="#cut"/></svg>
<div class="t" style="left:890px;top:406px">Вырезать</div>
<svg class="a" style="left:864px;top:430px" width="16" height="16"><use href="#copy"/></svg>
<div class="t" style="left:890px;top:430px">Копировать</div>
<svg class="a" style="left:864px;top:454px" width="16" height="16"><use href="#del"/></svg>
<div class="t" style="left:890px;top:454px">Удалить</div>
<svg class="a" style="left:864px;top:479px" width="16" height="16"><use href="#props"/></svg>
<div class="t" style="left:890px;top:479px">Свойства</div>
<svg class="a" style="left:864px;top:504px" width="16" height="16"><use href="#help"/></svg>
<div class="t" style="left:890px;top:504px">Справка</div>
<div class="a" style="left:864px;top:175px;width:223px;height:1px;background:#ebebeb"></div>
<div class="a" style="left:864px;top:249px;width:223px;height:1px;background:#ebebeb"></div>
<div class="a" style="left:864px;top:273px;width:223px;height:1px;background:#ebebeb"></div>
<div class="a" style="left:864px;top:322px;width:223px;height:1px;background:#ebebeb"></div>
<div class="a" style="left:864px;top:401px;width:223px;height:1px;background:#ebebeb"></div>
<div class="a" style="left:864px;top:474px;width:223px;height:1px;background:#ebebeb"></div>
<div class="a" style="left:864px;top:499px;width:223px;height:1px;background:#ebebeb"></div>
<div class="a" style="left:859px;top:352px;width:232px;height:25px;background:linear-gradient(#c3d5ec,#a4bddf);border-bottom:1px solid #a0b4d0"></div>
<div class="t" style="left:866px;top:357px;color:#1e1e1e">111</div>
<svg class="a" style="left:1074px;top:361px" width="11" height="7"><path d="M0 6.5L5.5 0.5L11 6.5Z" fill="#000"/></svg>
<!-- DIALOG -->
<div class="a" style="left:346px;top:121px;width:448px;height:580px;background:#f0f0f0;border:1px solid #5a5a5a"></div>
<div class="a" style="left:347px;top:122px;width:446px;height:29px;background:#fff"></div>
<div class="t" style="left:356px;top:127px;font-size:11.5px">Свойства: 111</div>
<svg class="a" style="left:772px;top:129px" width="12" height="12"><path d="M0.5 0.5L11.5 11.5M11.5 0.5L0.5 11.5" stroke="#111" stroke-width="1.1"/></svg>
<!-- tabs -->
<div class="a" style="left:355px;top:160px;width:428px;height:19px;background:#f0f0f0;border:1px solid #d9d9d9"></div>
<div class="a" style="left:442px;top:161px;width:1px;height:17px;background:#d9d9d9"></div>
<div class="a" style="left:606px;top:161px;width:1px;height:17px;background:#d9d9d9"></div>
<div class="t s11" style="left:355px;top:162px;width:87px;text-align:center">Общие</div>
<div class="t s11" style="left:443px;top:162px;width:163px;text-align:center">Программы и службы</div>
<div class="t s11" style="left:607px;top:162px;width:175px;text-align:center">Удаленные компьютеры</div>
<div class="a" style="left:353px;top:178px;width:430px;height:20px;background:#f0f0f0;border:1px solid #d9d9d9"></div>
<div class="a" style="left:546px;top:179px;width:1px;height:18px;background:#d9d9d9"></div>
<div class="a" style="left:650px;top:179px;width:1px;height:18px;background:#d9d9d9"></div>
<div class="t s11" style="left:481px;top:180px;width:65px;text-align:center">Область</div>
<div class="t s11" style="left:547px;top:180px;width:103px;text-align:center">Дополнительно</div>
<div class="t s11" style="left:651px;top:180px;width:132px;text-align:center">Локальные субъекты</div>
<!-- page -->
<div class="a" style="left:353px;top:197px;width:432px;height:466px;background:#fff;border:1px solid #d9d9d9;border-top:none"></div>
<div class="a" style="left:357px;top:198px;width:425px;height:462px;background:#f0f0f0"></div>
<div class="a" style="left:353px;top:176px;width:129px;height:22px;background:#fff;border:1px solid #d9d9d9;border-bottom:none"></div>
<div class="t s11" style="left:367px;top:178px">Протоколы и порты</div>
<!-- group -->
<div class="a" style="left:369px;top:216px;width:366px;height:286px;border:1px solid #dcdcdc;border-right:none"></div>
<div class="a" style="left:375px;top:210px;width:104px;height:12px;background:#f0f0f0"></div>
<div class="t s11" style="left:378px;top:209px">Протоколы и порты</div>
<svg class="a" style="left:376px;top:230px" width="44" height="28" viewBox="0 0 44 28">
<path d="M5.5 12.5L19 8L29 10.5L31 15L27 21.5L14 22L6.5 18.5Z" fill="#b9bec4" stroke="#8a8f95" stroke-width="0.6"/>
<path d="M7 12.5L19 9L28.5 11L17 14.5Z" fill="#e2e7ec"/>
<path d="M17 14.5L28.5 11L30 15L26.5 20.5Z" fill="#c4cad0"/>
<path d="M6.5 14L20 16.5L20.5 19.5L7.5 17.5Z" fill="#2a2a2a"/>
<path d="M8 15.5L9.5 16.8L11 15.8L12.5 17.1L14 16.1L15.5 17.4L17 16.4L18.5 17.7L19.5 17" stroke="#d8d8d0" stroke-width="0.8" fill="none"/>
<path d="M14 21.5L26.5 20.5" stroke="#777" stroke-width="0.8"/>
<path d="M27 10L36 8.5" stroke="#4a4f55" stroke-width="2.6" stroke-linecap="round"/>
<path d="M28 9.3L35 8.1" stroke="#9aa0a6" stroke-width="0.8"/>
</svg>
<div class="t s11" style="left:424px;top:235px">Тип протокола:</div>
<div class="t s11" style="left:424px;top:257px">Номер протокола:</div>
<div class="t s11" style="left:424px;top:301px">Локальный порт:</div>
<div class="t s11" style="left:424px;top:367px">Удаленный порт:</div>
<div class="t s11" style="left:424px;top:441px">Параметры протокола ICMP:</div>
<!-- combos -->
<div class="a" style="left:558px;top:233px;width:169px;height:21px;background:#e1e1e1;border:1px solid #adadad"></div>
<div class="t s11" style="left:562px;top:235px">TCP</div>
<svg class="a" style="left:713px;top:240px" width="10" height="6"><path d="M0.5 0.5L5 5L9.5 0.5" stroke="#333" stroke-width="1.1" fill="none"/></svg>
<div class="a" style="left:558px;top:257px;width:75px;height:20px;background:#f0f0f0;border:1px solid #cccccc"></div>
<div class="a" style="left:617px;top:258px;width:1px;height:18px;background:#e3e3e3"></div>
<div class="a" style="left:618px;top:267px;width:14px;height:1px;background:#e3e3e3"></div>
<div class="t s11" style="left:600px;top:258px;width:15px;text-align:right;color:#6d6d6d">6</div>
<svg class="a" style="left:621px;top:261px" width="7" height="13"><path d="M0.5 3.5L3.5 0.5L6.5 3.5Z" fill="#606060"/><path d="M0.5 9.5L3.5 12.5L6.5 9.5Z" fill="#606060"/></svg>
<div class="a" style="left:558px;top:299px;width:169px;height:21px;background:#e1e1e1;border:1px solid #adadad"></div>
<div class="t s11" style="left:562px;top:301px">Все порты</div>
<svg class="a" style="left:713px;top:306px" width="10" height="6"><path d="M0.5 0.5L5 5L9.5 0.5" stroke="#333" stroke-width="1.1" fill="none"/></svg>
<div class="a" style="left:558px;top:323px;width:169px;height:20px;background:#f0f0f0;border:1px solid #cccccc;box-shadow:inset 0 0 0 1px #fafafa"></div>
<div class="t s11" style="left:561px;top:345px">Пример: 80, 443, 5000-5010</div>
<div class="a" style="left:558px;top:365px;width:169px;height:21px;background:#e1e1e1;border:1px solid #adadad"></div>
<div class="t s11" style="left:561px;top:367px">Специальные порты</div>
<svg class="a" style="left:713px;top:372px" width="10" height="6"><path d="M0.5 0.5L5 5L9.5 0.5" stroke="#333" stroke-width="1.1" fill="none"/></svg>
<div class="a" style="left:558px;top:389px;width:169px;height:20px;background:#fff;border:1px solid #7a7a7a"></div>
<div class="t s11" style="left:561px;top:391px">50557, 8444, 50542, 8449, 8447</div>
<div class="t s11" style="left:561px;top:411px">Пример: 80, 443, 5000-5010</div>
<div class="a" style="left:628px;top:440px;width:100px;height:21px;background:#cccccc;border:1px solid #bfbfbf"></div>
<div class="t s11" style="left:628px;top:442px;width:100px;text-align:center;color:#838383">Настроить...</div>
<!-- buttons -->
<div class="a" style="left:551px;top:671px;width:73px;height:21px;background:#e1e1e1;border:2px solid #0078d7"></div>
<div class="t s11" style="left:551px;top:673px;width:73px;text-align:center">OK</div>
<div class="a" style="left:632px;top:671px;width:73px;height:21px;background:#e1e1e1;border:1px solid #adadad"></div>
<div class="t s11" style="left:632px;top:673px;width:73px;text-align:center">Отмена</div>
<div class="a" style="left:713px;top:671px;width:73px;height:21px;background:#cccccc;border:1px solid #bfbfbf"></div>
<div class="t s11" style="left:713px;top:673px;width:73px;text-align:center;color:#838383">При<u>м</u>енить</div>
</body></html>
